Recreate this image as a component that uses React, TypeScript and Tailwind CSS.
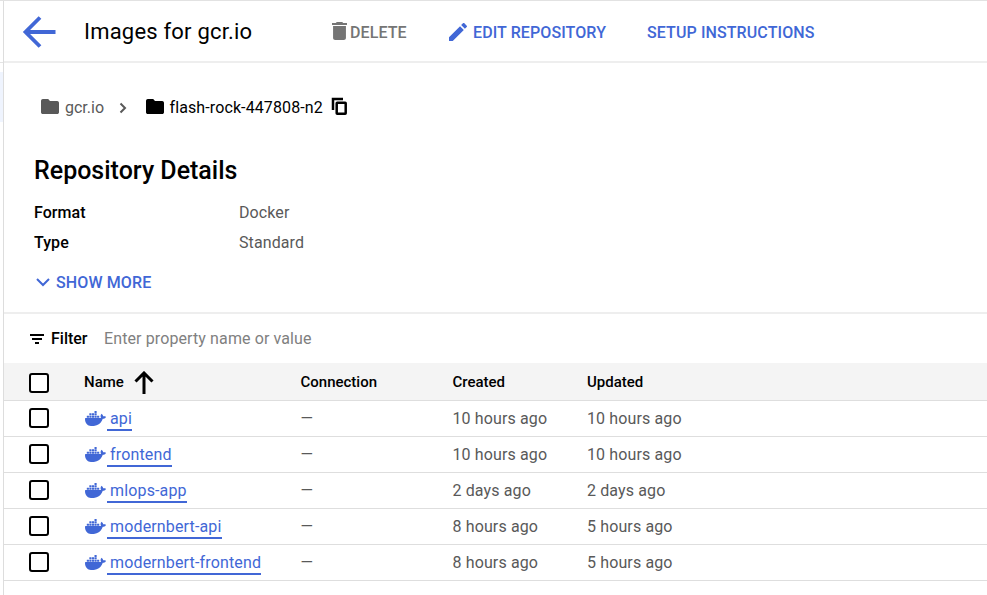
import type { ReactNode } from "react";
import { SiDocker } from "react-icons/si";

const images = [
  { name: "api", created: "10 hours ago", updated: "10 hours ago" },
  { name: "frontend", created: "10 hours ago", updated: "10 hours ago" },
  { name: "mlops-app", created: "2 days ago", updated: "2 days ago" },
  { name: "modernbert-api", created: "8 hours ago", updated: "5 hours ago" },
  { name: "modernbert-frontend", created: "8 hours ago", updated: "5 hours ago" },
];

function Folder({ className }: { className: string }) {
  return (
    <svg viewBox="2 4 20 16" preserveAspectRatio="none" className={`mb-[2px] h-[15px] w-[18px] shrink-0 ${className}`} fill="currentColor">
      <path d="M10 4H4c-1.100 0-2 .9-2 2v12c0 1.100.9 2 2 2h16c1.100 0 2-.9 2-2V8c0-1.100-.9-2-2-2h-8l-2-2z" />
    </svg>
  );
}

function Checkbox({ className }: { className: string }) {
  return <span className={`block h-5 w-5 rounded-[3px] border-2 border-black bg-white ${className}`} />;
}

function Columns({ className, children }: { className: string; children: ReactNode }) {
  return (
    <div className={`grid grid-cols-[55px_216.500px_151.500px_135px_1fr] items-center border-b border-[#dedede] pl-[25px] ${className}`}>
      {children}
    </div>
  );
}

function Header() {
  return (
    <header className="flex h-[62px] shrink-0 items-center border-b-2 border-[#eeeeee] pl-[18px] text-base font-medium tracking-[0.1px] text-[#4167d6]">
      <svg viewBox="0 0 36 36" className="mt-px h-9 w-9 shrink-0" fill="none" stroke="currentColor" strokeWidth="3.800">
        <path d="M18 3.500 3.500 18 18 32.500M3 18h30.500" />
      </svg>
      <h1 className="ml-[26px] w-[247px] text-[22px] font-normal tracking-[0.200px] text-black">Images for gcr.io</h1>
      <div className="flex w-[118px] items-center text-[#757575]">
        <svg viewBox="5 3 14 18" preserveAspectRatio="none" className="mr-[3px] ml-px h-[18px] w-[15px] shrink-0" fill="currentColor">
          <path d="M6 19c0 1.100.9 2 2 2h8c1.100 0 2-.9 2-2V7H6v12zM19 4h-3.500l-1-1h-5l-1 1H5v2h14V4z" />
        </svg>
        <span className="mt-[3px]">DELETE</span>
      </div>
      <div className="flex w-[198px] items-center">
        <svg viewBox="3 3 18 18" className="mt-px mr-[6px] h-[18px] w-[18px] shrink-0" fill="currentColor">
          <path d="M3 17.250V21h3.750L17.810 9.940l-3.750-3.750L3 17.250zM20.710 7.040c.39-.39.39-1.020 0-1.410l-2.340-2.340c-.39-.39-1.020-.39-1.410 0l-1.830 1.830 3.750 3.750 1.830-1.830z" />
        </svg>
        <span className="mt-[3px]">EDIT REPOSITORY</span>
      </div>
      <span className="mt-[3px]">SETUP INSTRUCTIONS</span>
    </header>
  );
}

function Details() {
  return (
    <section className="flex h-[251px] shrink-0 flex-col border-b-2 border-[#eeeeee] pl-[30px] text-base">
      <nav className="mt-[32px] flex h-6 items-center pl-[7px]">
        <Folder className="mr-[6px] text-[#595959]" />
        <span className="mt-[2px] w-[54px] text-[#595959]">gcr.io</span>
        <svg viewBox="0 0 8 12" className="mr-[19px] mt-px h-3 w-2" fill="none" stroke="#595959" strokeWidth="2">
          <path d="m1.500 1.500 4.500 4.500-4.500 4.500" />
        </svg>
        <Folder className="mr-[5.500px] text-black" />
        <span className="mt-[2px] w-[161.500px] tracking-[0.110px] text-black">flash-rock-447808-n2</span>
        <svg viewBox="0 0 16 18" className="mb-[3px] h-[18px] w-4" fill="none" stroke="black" strokeWidth="2.500">
          <path d="M2 13V2h10" />
          <rect x="5.700" y="5.700" width="9" height="11" rx="0.500" />
        </svg>
      </nav>
      <h2 className="mt-[35px] h-8 text-[25px] leading-[34px] font-medium text-black">Repository Details</h2>
      <dl className="mt-[12px] grid grid-cols-[205px_1fr] leading-[30px] tracking-[0.1px] text-[#595959]">
        <dt className="font-medium tracking-[0.050px] text-black">Format</dt>
        <dd>Docker</dd>
        <dt className="font-medium tracking-[0.050px] text-black">Type</dt>
        <dd>Standard</dd>
      </dl>
      <div className="mt-[13px] flex h-6 items-center font-medium tracking-[0.120px] text-[#4167d6]">
        <svg viewBox="0 0 16 10" className="mb-[2px] ml-px mr-[5px] h-[10px] w-4" fill="none" stroke="currentColor" strokeWidth="2">
          <path d="m2 2 6 6 6-6" />
        </svg>
        SHOW MORE
      </div>
    </section>
  );
}

function ImageTable() {
  return (
    <section className="text-base text-[#595959]">
      <div className="flex h-[49px] items-center pl-[26px]">
        <svg viewBox="0 0 14 12" className="mr-[7px] h-3 w-[14px]" stroke="black" strokeWidth="2">
          <path d="M0 2h14M2 6h10M5 10h4" />
        </svg>
        <span className="w-[53px] font-medium text-black">Filter</span>
        <span className="tracking-[0.110px] text-[#808080]">Enter property name or value</span>
      </div>
      <Columns className="h-[38px] bg-[#f4f4f4] text-[15px] font-medium text-black">
        <Checkbox className="mt-[2px]" />
        <div className="flex items-center pt-[2px]">
          <span className="w-[50px]">Name</span>
          <svg viewBox="0 0 20 24" className="h-6 w-5" fill="none" stroke="black" strokeWidth="3">
            <path d="M1.500 10.500 10 2l8.500 8.500M10 2v21" />
          </svg>
        </div>
        <span className="pt-[2px]">Connection</span>
        <span className="pt-[2px] pl-[0.500px]">Created</span>
        <span className="pt-[2px]">Updated</span>
      </Columns>
      {images.map((image) => (
        <Columns key={image.name} className="h-9 tracking-[0.130px]">
          <Checkbox className="mb-px" />
          <div className="flex items-center pl-[0.500px] text-[#4167d6]">
            <SiDocker className="mr-[1.500px] h-[21px] w-[21px] shrink-0" />
            <a className="h-[25px] border-b-2 border-[#4167d6] pl-[3px] leading-[25px] tracking-[0.150px]">{image.name}</a>
          </div>
          <span>—</span>
          <span className="pl-[0.500px]">{image.created}</span>
          <span>{image.updated}</span>
        </Columns>
      ))}
    </section>
  );
}

export default function App() {
  return (
    <div className="flex h-[595px] w-[987px] overflow-hidden border-t border-[#e2e2e2] bg-white font-['Roboto',sans-serif] whitespace-nowrap">
      <aside className="flex w-[4px] shrink-0 flex-col border-r border-[#dddddd]">
        <div className="h-[62px] border-b border-[#e4e4e4]" />
        <div className="mt-[9px] h-[50px] bg-[#eff4fe]" />
      </aside>
      <main className="flex min-w-0 flex-1 flex-col">
        <Header />
        <Details />
        <ImageTable />
      </main>
    </div>
  );
}
